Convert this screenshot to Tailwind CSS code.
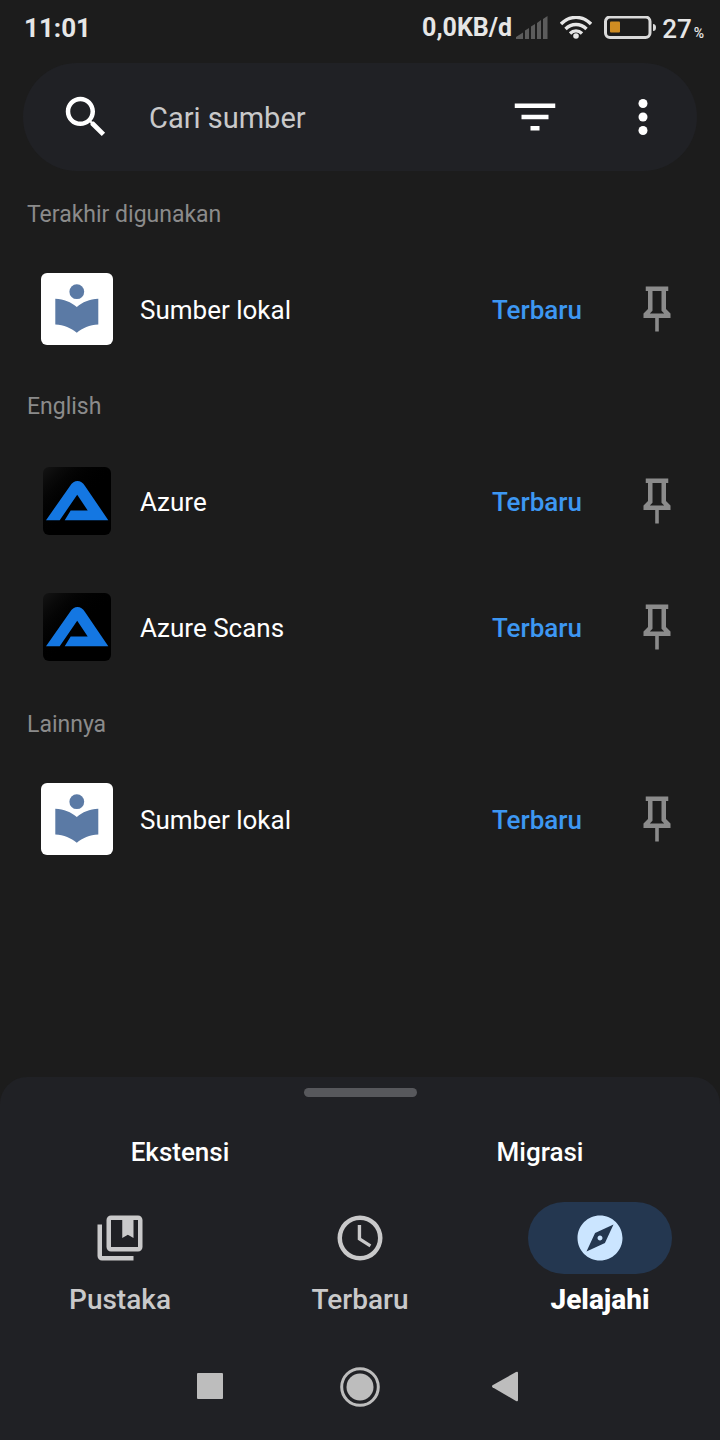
<!DOCTYPE html>
<html lang="id">
<head>
<meta charset="utf-8">
<meta name="viewport" content="width=device-width, initial-scale=1">
<title>Jelajahi</title>
<script src="https://cdn.jsdelivr.net/npm/@tailwindcss/browser@4"></script>
</head>
<body class="flex min-h-screen flex-col bg-[#1c1c1c] font-[Roboto,sans-serif] text-[26px] leading-8 text-white">

<svg class="hidden" aria-hidden="true">
  <symbol id="pin" viewBox="0 0 24 24"><path d="M16,12V4H17V2H7V4H8V12L6,14V16H11.2V22H12.8V16H18V14L16,12M8.8,14L10,12.8V4H14V12.8L15.2,14H8.8Z"/></symbol>
  <symbol id="local" viewBox="0 0 72 72"><circle cx="35.800" cy="18.700" r="7.400"/><path d="M14.300 25.700C23 26 30 29 35.800 34 41.500 29 48.500 26 57.300 25.700V51.500C48.500 52 41.500 55 35.800 59.700 30 55 23 52 14.300 51.500Z"/></symbol>
  <symbol id="azure" viewBox="0 0 68 68"><path d="M3 53.200 27 19C31 12.300 38 12.300 42 19L65.300 53.200H21.700L27.700 43.500H44.700L34.200 27.800 16.700 53.200Z"/></symbol>
</svg>

<header class="flex h-14 items-center justify-between pr-4 pl-6 font-bold text-[#e6e6e6]">
  <time>11:01</time>
  <div class="flex items-center gap-3">
    <div class="flex items-center gap-1">
      <span class="text-[25px] font-bold">0,0KB/d</span>
      <svg class="h-6 w-8 fill-[#5c5c5c]" viewBox="0 0 32 24"><path d="M0 23V21L7 16.500V23ZM9 23V14.500L13 12V23ZM15 23V10.500L19 8V23ZM21 23V7L25 4V23ZM27 23V3L31.500 0V23Z"/></svg>
    </div>
    <svg class="h-6 w-8 fill-none stroke-[#e6e6e6] stroke-[3.4]" viewBox="0 0 32 24"><path d="M1 8C9.500-.8 22.500-.8 31 8M5.500 13C11.500 7 20.500 7 26.500 13M10 17.500C13.500 14 18.500 14 22 17.500"/><circle cx="16" cy="20" r="2.800" class="fill-[#e6e6e6] stroke-none"/></svg>
    <div class="flex items-center gap-1">
      <svg class="h-6 w-[54px] fill-none" viewBox="0 0 54 24"><rect x="1.500" y="1" width="44.500" height="20.500" rx="4.500" class="stroke-[#dadada] stroke-[3]"/><rect x="6" y="5.500" width="10" height="11" rx="1" class="fill-[#cf8c22]"/><path d="M49 8q3 0 3 3.500t-3 3.500z" class="fill-[#dadada]"/></svg>
      <span class="pt-0.5 font-medium">27<span class="ml-0.5 text-[14px] leading-none">%</span></span>
    </div>
  </div>
</header>

<form role="search" class="mx-[23px] mt-[7px] flex h-27 items-center rounded-full bg-[#202125] pr-[27px] pl-9">
  <button type="submit" aria-label="Cari" class="shrink-0"><svg class="size-[54px] fill-white" viewBox="0 0 24 24"><path d="M15.500,14h-.79l-.28-.27C15.410,12.590 16,11.110 16,9.500 16,5.910 13.090,3 9.500,3S3,5.910 3,9.500 5.910,16 9.500,16c1.610,0 3.090-.59 4.230-1.570l.27.28v.79l5,4.990L20.490,19l-4.990-5zM9.500,14C7.010,14 5,11.990 5,9.500S7.010,5 9.500,5 14,7.010 14,9.500 11.990,14 9.500,14z"/></svg></button>
  <input type="search" aria-label="Cari sumber" placeholder="Cari sumber" class="ml-9 min-w-0 flex-1 bg-transparent pt-0.5 text-[29px] leading-9 outline-none placeholder:text-[#c9c9ca]">
  <button type="button" aria-label="Filter" class="shrink-0"><svg class="size-[54px] fill-white" viewBox="0 0 24 24"><path d="M10,18h4v-2h-4v2zM3,6v2h18V6H3zM6,13h12v-2H6v2z"/></svg></button>
  <button type="button" aria-label="Opsi lainnya" class="ml-[54px] shrink-0"><svg class="size-[54px] fill-white" viewBox="0 0 24 24"><circle cx="12" cy="6" r="2"/><circle cx="12" cy="12" r="2"/><circle cx="12" cy="18" r="2"/></svg></button>
</form>

<main class="mt-[9px] flex-1 pb-9">
  <section>
    <h2 class="flex h-[66px] items-center px-[27px] pt-1 text-[23px] text-[#8b8b8b]">Terakhir digunakan</h2>
    <ul>
      <li class="flex h-[126px] items-center pr-9 pl-[41px]">
        <span class="size-18 shrink-0 rounded-md bg-white"><svg class="size-18 fill-[#5b7aa5]"><use href="#local"/></svg></span>
        <a href="#" class="ml-[27px] flex-1 pt-0.5">Sumber lokal</a>
        <button type="button" class="pt-0.5 font-medium text-[#3d97f2]">Terbaru</button>
        <button type="button" aria-label="Sematkan Sumber lokal" class="ml-12"><svg class="size-[54px] fill-[#8b8b8b]"><use href="#pin"/></svg></button>
      </li>
    </ul>
  </section>
  <section>
    <h2 class="flex h-[66px] items-center px-[27px] pt-1 text-[23px] text-[#8b8b8b]">English</h2>
    <ul>
      <li class="flex h-[126px] items-center pr-9 pl-[41px]">
        <span class="flex size-18 shrink-0 items-center justify-center"><svg class="size-17 rounded-md bg-linear-to-br from-[#141414] to-black to-60% fill-[#1477e2]"><use href="#azure"/></svg></span>
        <a href="#" class="ml-[27px] flex-1 pt-0.5">Azure</a>
        <button type="button" class="pt-0.5 font-medium text-[#3d97f2]">Terbaru</button>
        <button type="button" aria-label="Sematkan Azure" class="ml-12"><svg class="size-[54px] fill-[#8b8b8b]"><use href="#pin"/></svg></button>
      </li>
      <li class="flex h-[126px] items-center pr-9 pl-[41px]">
        <span class="flex size-18 shrink-0 items-center justify-center"><svg class="size-17 rounded-md bg-linear-to-br from-[#141414] to-black to-60% fill-[#1477e2]"><use href="#azure"/></svg></span>
        <a href="#" class="ml-[27px] flex-1 pt-0.5">Azure Scans</a>
        <button type="button" class="pt-0.5 font-medium text-[#3d97f2]">Terbaru</button>
        <button type="button" aria-label="Sematkan Azure Scans" class="ml-12"><svg class="size-[54px] fill-[#8b8b8b]"><use href="#pin"/></svg></button>
      </li>
    </ul>
  </section>
  <section>
    <h2 class="flex h-[66px] items-center px-[27px] pt-1 text-[23px] text-[#8b8b8b]">Lainnya</h2>
    <ul>
      <li class="flex h-[126px] items-center pr-9 pl-[41px]">
        <span class="size-18 shrink-0 rounded-md bg-white"><svg class="size-18 fill-[#5b7aa5]"><use href="#local"/></svg></span>
        <a href="#" class="ml-[27px] flex-1 pt-0.5">Sumber lokal</a>
        <button type="button" class="pt-0.5 font-medium text-[#3d97f2]">Terbaru</button>
        <button type="button" aria-label="Sematkan Sumber lokal" class="ml-12"><svg class="size-[54px] fill-[#8b8b8b]"><use href="#pin"/></svg></button>
      </li>
    </ul>
  </section>
</main>

<footer class="rounded-t-[27px] bg-[#202125] pt-[11px]">
  <div class="mx-auto h-[9px] w-[113px] rounded-full bg-[#57585c]"></div>
  <div class="mt-[39px] grid grid-cols-2 font-medium">
    <button type="button">Ekstensi</button>
    <button type="button">Migrasi</button>
  </div>
  <nav class="mt-[34px] grid grid-cols-3 text-[28px] font-medium text-[#c9c9ca]">
    <a href="#" class="flex flex-col items-center gap-2.5">
      <span class="flex h-18 w-36 items-center justify-center"><svg class="size-[54px] fill-[#c9c9ca]" viewBox="0 0 24 24"><path fill-rule="evenodd" d="M4,6H2v14c0,1.100 .9,2 2,2h14v-2H4V6zM20,2H8C6.900,2 6,2.900 6,4v12c0,1.100 .9,2 2,2h12c1.100,0 2,-.9 2,-2V4C22,2.900 21.100,2 20,2zM20,16H8V4h5v8l2.500,-1.500L18,12V4h2V16z"/></svg></span>
      Pustaka
    </a>
    <a href="#" class="flex flex-col items-center gap-2.5">
      <span class="flex h-18 w-36 items-center justify-center"><svg class="size-[54px] fill-[#c9c9ca]" viewBox="0 0 24 24"><path fill-rule="evenodd" d="M12,2a10,10 0 1,0 0,20a10,10 0 1,0 0,-20zM12,4a8,8 0 1,1 0,16a8,8 0 1,1 0,-16z"/><path d="M12.500,6.200H11v6.600l5.250,3.350.75-1.230-4.500-2.870z"/></svg></span>
      Terbaru
    </a>
    <a href="#" aria-current="page" class="flex flex-col items-center gap-2.5 font-extrabold text-white">
      <span class="flex h-18 w-36 items-center justify-center rounded-full bg-[#243750]"><svg class="size-[54px] fill-[#cbe5ff]" viewBox="0 0 24 24"><path d="M12,10.900c-.61,0-1.100.49-1.100,1.100s.49,1.100 1.100,1.100 1.100-.49 1.100-1.100-.49-1.100-1.100-1.100zM12,2C6.480,2 2,6.480 2,12s4.480,10 10,10 10-4.480 10-10S17.520,2 12,2zm2.190,12.190L6,18l3.810-8.190L18,6l-3.810,8.190z"/></svg></span>
      Jelajahi
    </a>
  </nav>
  <div class="mt-4 flex h-[108px] items-center justify-center gap-[110px] pt-0.5">
    <button type="button" aria-label="Aplikasi terbaru"><svg class="size-10 fill-[#bdbdbd]" viewBox="0 0 40 40"><rect x="7" y="6" width="26" height="26" rx="1"/></svg></button>
    <button type="button" aria-label="Beranda"><svg class="size-10 fill-[#bdbdbd]" viewBox="0 0 40 40"><circle cx="20" cy="20" r="18.300" class="fill-none stroke-[#bdbdbd] stroke-3"/><circle cx="20" cy="20" r="13.500"/></svg></button>
    <button type="button" aria-label="Kembali"><svg class="size-10 fill-[#bdbdbd]" viewBox="0 0 40 40"><path d="M2.500 18.300 26 5q2-1 2 1V33q0 2-2 1L2.500 20.300q-1-1 0-2z"/></svg></button>
  </div>
</footer>
</body>
</html>
